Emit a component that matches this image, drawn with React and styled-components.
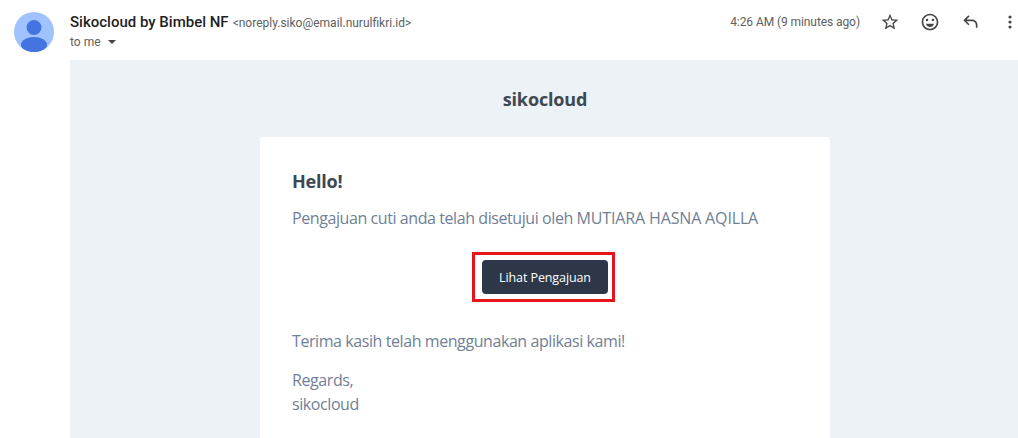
import React from 'react';
import styled, { createGlobalStyle } from 'styled-components';

const GlobalStyle = createGlobalStyle`
  html, body {
    margin: 0;
    background: #fff;
    overflow: hidden;
  }
`;

const Page = styled.div`
  width: 1018px;
  height: 438px;
  overflow: hidden;
  display: grid;
  grid-template-columns: 70px 1fr;
  font-family: Roboto, 'Liberation Sans', sans-serif;
`;

const AvatarCol = styled.div`
  padding: 12px 0 0 14px;
`;

const Main = styled.div`
  display: flex;
  flex-direction: column;
  min-width: 0;
`;

const Header = styled.div`
  height: 60px;
  flex: none;
  display: flex;
  justify-content: space-between;
  align-items: flex-start;
`;

const Sender = styled.div`
  padding-top: 13px;
`;

const NameRow = styled.div`
  display: flex;
  align-items: baseline;
  gap: 4px;
  height: 20px;
`;

const Name = styled.span`
  font-size: 15px;
  font-weight: 500;
  color: #1f1f1f;
`;

const Address = styled.span`
  font-size: 12px;
  color: #5e5e5e;
`;

const ToRow = styled.div`
  display: flex;
  align-items: center;
  gap: 7px;
  margin-top: 2px;
  font-size: 12px;
  color: #5e5e5e;
`;

const Caret = styled.span`
  width: 0;
  height: 0;
  border-left: 4px solid transparent;
  border-right: 4px solid transparent;
  border-top: 4px solid #444;
`;

const Actions = styled.div`
  display: flex;
  align-items: center;
  padding-top: 12px;
`;

const Time = styled.span`
  font-size: 12px;
  color: #5e5e5e;
  margin-right: 10px;
  letter-spacing: -0.08px;
`;

const IconSlot = styled.span`
  width: 40px;
  height: 20px;
  display: flex;
  align-items: center;
  justify-content: center;
  color: #444746;
  svg {
    flex: none;
  }
  &:last-child {
    width: 16px;
    margin-left: 12px;
  }
`;

const Mail = styled.div`
  flex: 1;
  background: #edf2f7;
  font-family: 'Open Sans', 'Noto Sans', sans-serif;
  display: flex;
  flex-direction: column;
  align-items: center;
  padding-left: 2px;
`;

const Brand = styled.div`
  height: 77px;
  flex: none;
  display: flex;
  align-items: center;
  justify-content: center;
  font-size: 18px;
  font-weight: 700;
  color: #3d4852;
  letter-spacing: -0.15px;
`;

const Card = styled.div`
  width: 570px;
  box-sizing: border-box;
  background: #fff;
  border-radius: 2px 2px 0 0;
  padding: 32px;
  flex: 1;
`;

const Greeting = styled.h1`
  margin: 0;
  font-size: 18px;
  line-height: 25px;
  font-weight: 700;
  color: #3d4852;
  letter-spacing: -0.2px;
`;

const Paragraph = styled.p`
  margin: ${({ $top }) => $top}px 0 0;
  font-size: 16px;
  line-height: 24px;
  color: #718096;
  letter-spacing: -0.42px;
`;

const Approver = styled.span`
  letter-spacing: -0.15px;
`;

const ButtonRow = styled.div`
  display: flex;
  justify-content: center;
  margin-top: 30px;
`;

const Marked = styled.div`
  position: relative;
  display: flex;
  &::after {
    content: '';
    position: absolute;
    left: -10px;
    right: -7px;
    top: -8px;
    bottom: -8px;
    border: 3px solid #e8141c;
  }
`;

const ActionButton = styled.a`
  width: 126px;
  height: 34px;
  display: flex;
  align-items: center;
  justify-content: center;
  background: #2d3748;
  border-radius: 4px;
  color: #fff;
  font-size: 12.5px;
  letter-spacing: -0.1px;
`;

const Avatar = () => (
  <svg width="40" height="40" viewBox="0 0 40 40">
    <defs>
      <clipPath id="avatar-clip">
        <circle cx="20" cy="20" r="20" />
      </clipPath>
    </defs>
    <circle cx="20" cy="20" r="20" fill="#a0c3ff" />
    <g clipPath="url(#avatar-clip)" fill="#4374e0">
      <circle cx="20" cy="15.5" r="7.5" />
      <ellipse cx="20" cy="33" rx="13" ry="8" />
    </g>
  </svg>
);

const StarIcon = () => (
  <svg width="20" height="20" viewBox="0 0 24 24" fill="currentColor">
    <path d="M22 9.24l-7.19-.62L12 2 9.19 8.63 2 9.24l5.46 4.73L5.82 21 12 17.27 18.18 21l-1.63-7.03L22 9.24zM12 15.4l-3.76 2.27 1-4.28-3.32-2.88 4.38-.38L12 6.1l1.71 4.04 4.38.38-3.32 2.88 1 4.28L12 15.4z" />
  </svg>
);

const SmileIcon = () => (
  <svg width="20" height="20" viewBox="0 0 24 24" fill="currentColor">
    <circle cx="15.5" cy="9.5" r="1.5" />
    <circle cx="8.5" cy="9.5" r="1.5" />
    <path d="M12 18c2.28 0 4.22-1.66 5-4H7c.78 2.34 2.72 4 5 4z" />
    <path d="M11.99 2C6.47 2 2 6.48 2 12s4.47 10 9.99 10C17.52 22 22 17.52 22 12S17.52 2 11.99 2zM12 20c-4.42 0-8-3.58-8-8s3.58-8 8-8 8 3.58 8 8-3.58 8-8 8z" />
  </svg>
);

const ReplyIcon = () => (
  <svg width="20" height="20" viewBox="0 0 24 24" fill="currentColor">
    <path d="M21 19h-2v-3.5c0-2.5-2-4.5-4.5-4.5H7.83l3.58 3.59L10 16l-6-6 6-6 1.41 1.41L7.83 9h6.67C18.09 9 21 11.91 21 15.5V19z" />
  </svg>
);

const MoreIcon = () => (
  <svg width="20" height="20" viewBox="0 0 24 24" fill="currentColor">
    <circle cx="12" cy="6" r="1.9" />
    <circle cx="12" cy="12" r="1.9" />
    <circle cx="12" cy="18" r="1.9" />
  </svg>
);

export default function App() {
  return (
    <>
      <GlobalStyle />
      <Page>
        <AvatarCol>
          <Avatar />
        </AvatarCol>
        <Main>
          <Header>
            <Sender>
              <NameRow>
                <Name>Sikocloud by Bimbel NF</Name>
                <Address>&lt;noreply.siko@email.nurulfikri.id&gt;</Address>
              </NameRow>
              <ToRow>
                to me <Caret />
              </ToRow>
            </Sender>
            <Actions>
              <Time>4:26 AM (9 minutes ago)</Time>
              <IconSlot><StarIcon /></IconSlot>
              <IconSlot><SmileIcon /></IconSlot>
              <IconSlot><ReplyIcon /></IconSlot>
              <IconSlot><MoreIcon /></IconSlot>
            </Actions>
          </Header>
          <Mail>
            <Brand>sikocloud</Brand>
            <Card>
              <Greeting>Hello!</Greeting>
              <Paragraph $top={12}>
                Pengajuan cuti anda telah disetujui oleh <Approver>MUTIARA HASNA AQILLA</Approver>
              </Paragraph>
              <ButtonRow>
                <Marked>
                  <ActionButton>Lihat Pengajuan</ActionButton>
                </Marked>
              </ButtonRow>
              <Paragraph $top={35}>Terima kasih telah menggunakan aplikasi kami!</Paragraph>
              <Paragraph $top={15}>Regards,<br />sikocloud</Paragraph>
            </Card>
          </Mail>
        </Main>
      </Page>
    </>
  );
}
